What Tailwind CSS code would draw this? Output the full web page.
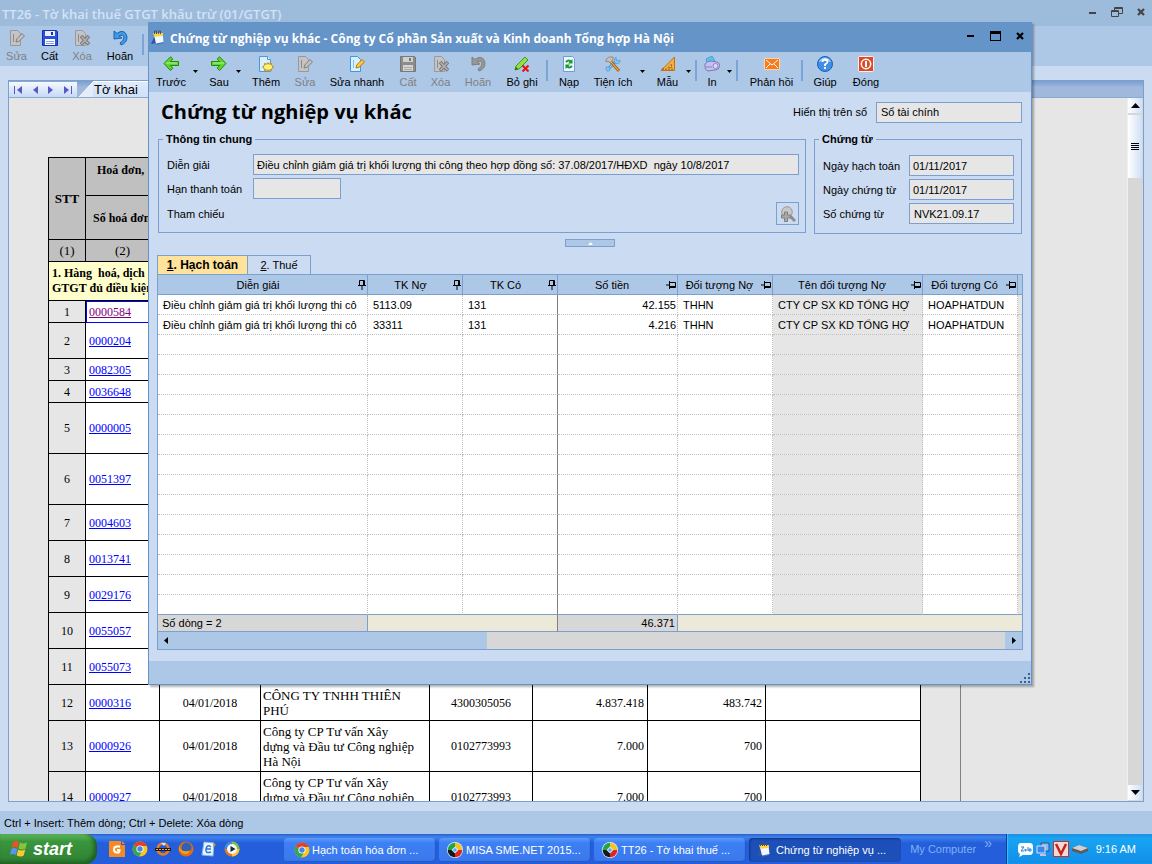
<!DOCTYPE html>
<html lang="vi">
<head>
    <meta charset="UTF-8">
    <meta name="viewport" content="width=device-width, initial-scale=1.0">
    <title>TT26 - Tờ khai thuế GTGT khấu trừ (01/GTGT)</title>
    <script src="https://cdn.jsdelivr.net/npm/@tailwindcss/browser@4"></script>
</head>
<body class="h-screen overflow-hidden bg-[#cbdbf1] font-['Liberation_Sans',sans-serif] text-[11px] leading-[14px] text-black">

    <!-- Icon set -->
    <svg class="hidden">
        <symbol id="i-left" viewBox="0 0 16 16"><path d="M7.500.8 1 7.500l6.500 7 2.300-2.300L7.300 9.500H15.500V5.500H7.300l2.500-2.500z" fill="#5fd62c" stroke="#1f8a16" stroke-linejoin="round"/><path d="M3 7h11" stroke="#b4f58c"/></symbol>
        <symbol id="i-right" viewBox="0 0 16 16"><path d="m8.500.8 6.500 6.700-6.500 7-2.300-2.300 2.500-2.700H.5V5.500h8.200L6.200 3z" fill="#5fd62c" stroke="#1f8a16" stroke-linejoin="round"/><path d="M2 7h11" stroke="#b4f58c"/></symbol>
        <symbol id="i-caret" viewBox="0 0 5 3"><path d="M0 0h5L2.500 3z" fill="#000"/></symbol>
        <symbol id="i-add" viewBox="0 0 16 16"><path d="M1.500.5h8l3 3v12h-11z" fill="#d8efff" stroke="#4a9ad8"/><path d="M9.500.5v3h3" fill="#fff" stroke="#4a9ad8"/><path d="m10 6 1.500 1.500L14 7v2l2 2-2 2v2l-2.500-.5L10 16l-1.500-1.500L6 15v-2l-2-2 2-2V7l2.500.5z" fill="#c79a1c"/><ellipse cx="10" cy="11" rx="4" ry="2.800" fill="#fff27a"/></symbol>
        <symbol id="i-edit" viewBox="0 0 16 16"><path d="M1.500.5h7l3 3v12h-10z" fill="#d8efff" stroke="#3f97dc"/><path d="M4 4h1v8H4z" fill="#7fc0ee"/><path d="m7 12 .7-3L13 3.500 15.500 6 10 11.300z" fill="#ffc83c" stroke="#b97a12"/></symbol>
        <symbol id="i-edit-off" viewBox="0 0 16 16"><path d="M1.500.5h7l3 3v12h-10z" fill="#c4c4c4" stroke="#989898"/><path d="M4 4h1v8H4z" fill="#8d8d8d"/><path d="m7 12 .7-3L13 3.500 15.500 6 10 11.300z" fill="#c0c0c0" stroke="#808080"/></symbol>
        <symbol id="i-save" viewBox="0 0 16 16"><path d="M.5.5h14l1 1v14H.5z" fill="#2b50dc" stroke="#1b30b0"/><path d="M3 1h10v5H3z" fill="#e8f0ff"/><path d="M9 2h2v3H9z" fill="#1b30b0"/><path d="M3 9h10v6H3z" fill="#fff"/><path d="M4 11h8v1H4zM4 13h8v1H4z" fill="#8aa4ec"/></symbol>
        <symbol id="i-save-off" viewBox="0 0 16 16"><path d="M.5.5h14l1 1v14H.5z" fill="#8c8c8c" stroke="#787878"/><path d="M3 1h10v5H3z" fill="#d0d0d0"/><path d="M9 2h2v3H9z" fill="#777"/><path d="M3 9h10v6H3z" fill="#d4d4d4"/><path d="M4 11h8v1H4zM4 13h8v1H4z" fill="#aaa"/></symbol>
        <symbol id="i-del-off" viewBox="0 0 16 16"><path d="M1.500.5h7l3 3v12h-10z" fill="#c4c4c4" stroke="#9a9a9a"/><path d="M4 4h1v8H4z" fill="#8d8d8d"/><path d="m7 6 8 8.500m0-8.500-8 8.500" stroke="#777" stroke-width="3.500"/><path d="m7.500 6.500 7 7.500m0-7.500-7 7.500" stroke="#b5b5b5" stroke-width="1.500"/></symbol>
        <symbol id="i-undo" viewBox="0 0 16 16"><path d="M2 1v8l8-1-3-2q4-2 5 1 0 4-4 6l1 2q6-2 6-8Q14 1 9 1.500 7 2 5 3.500z" fill="#3d9be8" stroke="#1b62ae"/></symbol>
        <symbol id="i-undo-off" viewBox="0 0 16 16"><path d="M2 1v8l8-1-3-2q4-2 5 1 0 4-4 6l1 2q6-2 6-8Q14 1 9 1.500 7 2 5 3.500z" fill="#979797" stroke="#7e7e7e"/></symbol>
        <symbol id="i-unpost" viewBox="0 0 16 16"><path d="m1 14 1-4L11 1l3 3-9 9z" fill="#8fe04a" stroke="#3e9a1a"/><path d="m1 14 1-3 2 2z" fill="#5c4a20"/><path d="m8.500 9.500 6 6m0-6-6 6" stroke="#e81010" stroke-width="2"/></symbol>
        <symbol id="i-reload" viewBox="0 0 16 16"><path d="M2.500.5h9l2 2v13h-11z" fill="#eef5ff" stroke="#6f9bd8"/><path d="M5 6q3-3 5 0M11 10q-3 3-5 0" fill="none" stroke="#12992a" stroke-width="2"/><path d="M11.500 3v4.500H7zM4.500 13V8.500H9z" fill="#12992a"/></symbol>
        <symbol id="i-tools" viewBox="0 0 16 16"><path d="m3 13 9-9" stroke="#4b97d6" stroke-width="3"/><path d="m3 13 9-9" stroke="#b9dcfa"/><path d="M11 1v3l2 1 2-1v2l-2 2-3-1-1-3zM1 11h3l1 3-1 1H2l-1-2z" fill="#8cc3ef" stroke="#4b97d6" stroke-width=".7"/><path d="m6 6 8 9" stroke="#a8661a" stroke-width="3"/><path d="m6 6 7.500 8.500" stroke="#ffc14a"/><path d="M1 3.500 4 1h4v2L5 7 3 5 1 6z" fill="#c9c0ae" stroke="#7e7668" stroke-width=".7"/></symbol>
        <symbol id="i-ruler" viewBox="0 0 16 16"><path d="M14.500 1v13.500H1z" fill="#f5ad3c" stroke="#bd7413"/><path d="M11.500 8v3.500H8z" fill="#cfe0f4" stroke="#bd7413"/><path d="M3 14v-2M6 14v-1.500M9 14v-1.500M12 14v-1.500" stroke="#7d4a08"/></symbol>
        <symbol id="i-print" viewBox="0 0 16 16"><path d="m3 7-1-4 6-3 3 5z" fill="#5bc0f0" stroke="#3b93c9" stroke-width=".7"/><path d="M1 8q2-3 6-3l6 1q3 1 3 4-1 4-5 4l-7 1q-3-1-3-4z" fill="#c4c1ee" stroke="#7b77bd"/><circle cx="11.500" cy="10" r="2.500" fill="#dcdaf8" stroke="#8a86c8"/><path d="M2 11h6" stroke="#8a86c8"/></symbol>
        <symbol id="i-mail" viewBox="0 0 16 16"><path d="M.5 2.500h15v11H.5z" fill="#f47b20" stroke="#fbd3a8"/><path d="m2 4 6 5 6-5M2 12l4-4m8 4-4-4" fill="none" stroke="#fff"/></symbol>
        <symbol id="i-help" viewBox="0 0 16 16"><circle cx="8" cy="8" r="7.500" fill="#3f8fe6" stroke="#1c5fb4"/><path d="M2 6q1-4 6-4.500Q13 2 14 6q-6-2-12 0" fill="#9ccaf8"/><path d="M5.500 6q0-2.500 2.500-2.500T10.500 6Q10.500 7 8 8.500V10m0 1v2" fill="none" stroke="#fff" stroke-width="1.800"/></symbol>
        <symbol id="i-close" viewBox="0 0 16 16"><rect x=".5" y=".5" width="15" height="15" rx="1" fill="#de4a28" stroke="#fff0e8"/><circle cx="8" cy="8" r="4.700" fill="none" stroke="#fff" stroke-width="1.500"/><path d="M8 5v6" stroke="#fff" stroke-width="2"/></symbol>
        <symbol id="i-note" viewBox="0 0 16 16"><path d="m0 14 4-9 3 8z" fill="#2a55b0"/><path d="m11 3 1.500 10L5 15z" fill="#3f6fc4"/><path d="M2.500 3h9l1 9-7.500 1.500z" fill="#f2f8ff"/><path d="M2.500 3h9l.3 3-8.800.7z" fill="#ffd23c"/><path d="M3.500 4V1h2v3m2 0V1h2v3" fill="none" stroke="#44546e"/></symbol>
        <symbol id="i-pin" viewBox="0 0 8 10"><path d="M1.500 5V.5h5V5M0 5.500h8M4 6v4M5.500 1v4" fill="none" stroke="#000"/></symbol>
        <symbol id="i-pin-side" viewBox="0 0 10 8"><path d="M4 1.500h5.500v5H4M3.500 0v8M0 4h3M4 5.500h5" fill="none" stroke="#000"/></symbol>
        <symbol id="i-chrome" viewBox="0 0 16 16"><circle cx="8" cy="8" r="7.500" fill="#fbc51b"/><path d="M8 8 1.500 4.200A7.500 7.500 0 0 1 14.500 4.200L15 5H8z" fill="#e0402f"/><path d="M8 8 1.500 4.200A7.500 7.500 0 0 0 7 15.400l3.500-6z" fill="#35a552"/><circle cx="8" cy="8" r="3.600" fill="#fff"/><circle cx="8" cy="8" r="2.700" fill="#4585ee"/></symbol>
        <symbol id="i-misa" viewBox="0 0 16 16"><circle cx="8" cy="8" r="8" fill="#e8ecf0"/><path d="M8 8V.7A7.300 7.300 0 0 0 .7 8z" fill="#22a548"/><path d="M8 8h7.300A7.300 7.300 0 0 0 8 .7z" fill="#f2c41c"/><path d="M8 8v7.300A7.300 7.300 0 0 0 15.300 8z" fill="#e02420"/><path d="M8 8H.7A7.300 7.300 0 0 0 8 15.300z" fill="#181818"/><path d="m8 4.500 3.500 3.500L8 11.500 4.500 8z" fill="#cfe4fb"/><path d="m8 6 2 2-2 2-2-2z" fill="#5aa5ee"/></symbol>
    </svg>

    <div class="flex h-full flex-col">

        <!-- Main window -->
        <header class="flex h-[26px] shrink-0 items-center justify-between bg-[#9dbbdb] pl-[2px] pr-[7px] pt-[2px]">
            <h1 class="whitespace-nowrap font-['Open_Sans',sans-serif] text-[13px] font-semibold text-[#d3e2f5]">TT26 - Tờ khai thuế GTGT khấu trừ (01/GTGT)</h1>
            <div class="flex items-center gap-[14px] pb-1">
                <button aria-label="Thu nhỏ"><svg class="h-[11px] w-[8px]" viewBox="0 0 8 11"><path d="M0 5h7v2H0z" fill="#444"/></svg></button>
                <button aria-label="Khôi phục"><svg class="h-[11px] w-[12px]" viewBox="0 0 12 11"><path d="M3.500 3V.5h8v6H8M4 1.500h7M.5 3.500h7v6h-7zM1 4.500h6" fill="none" stroke="#444"/></svg></button>
                <button aria-label="Đóng"><svg class="h-[8px] w-[8px]" viewBox="0 0 8 8"><path d="m1 1 6 6m0-6L1 7" stroke="#444" stroke-width="2.200"/></svg></button>
            </div>
        </header>
        <nav class="flex h-10 shrink-0 items-start bg-[#adc7e7]">
            <button disabled class="flex w-[33px] flex-col items-center gap-[3px] pt-1 text-[#808080]"><svg class="size-4"><use href="#i-edit-off"/></svg>Sửa</button>
            <button class="flex w-[33px] flex-col items-center gap-[3px] pt-1"><svg class="size-4"><use href="#i-save"/></svg>Cất</button>
            <button disabled class="flex w-8 flex-col items-center gap-[3px] pt-1 text-[#808080]"><svg class="size-4"><use href="#i-del-off"/></svg>Xóa</button>
            <button class="flex w-11 flex-col items-center gap-[3px] pt-1"><svg class="size-4"><use href="#i-undo"/></svg>Hoãn</button>
            <span class="mt-2 h-[21px] w-[2px] bg-[#7ba5d8]"></span>
        </nav>

        <main class="flex min-h-0 flex-1 flex-col px-2 pb-[9px] pt-[14px]">
            <div class="flex min-h-0 flex-1 flex-col border border-[#7ba0cf] bg-[#e6e6e6]">
                <div class="flex h-[17px] shrink-0 items-stretch border-b border-[#8ea9cf] bg-linear-to-b from-[#7a9fd0] to-[#a1b8dd] to-40%">
                    <div class="flex w-[68px] items-center justify-around border-t border-[#8ea9cf] bg-linear-to-b from-[#f4f9ff] to-[#c5daf5]">
                        <button aria-label="Đầu"><svg class="h-2 w-2" viewBox="0 0 8 8"><path d="M0 0h1v8H0zM8 0v8L3 4z" fill="#5a57cc"/></svg></button>
                        <button aria-label="Trước"><svg class="h-2 w-[5px]" viewBox="0 0 5 8"><path d="M5 0v8L0 4z" fill="#5a57cc"/></svg></button>
                        <button aria-label="Sau"><svg class="h-2 w-[5px]" viewBox="0 0 5 8"><path d="M0 0v8l5-4z" fill="#5a57cc"/></svg></button>
                        <button aria-label="Cuối"><svg class="h-2 w-2" viewBox="0 0 8 8"><path d="M7 0h1v8H7zM0 0v8l5-4z" fill="#5a57cc"/></svg></button>
                    </div>
                    <svg class="ml-[2px] h-4 w-[14px]" viewBox="0 0 14 16"><path d="M0 16 14 1v15z" fill="#e2edfb"/><path d="M0 16 14 1" stroke="#fff"/></svg>
                    <button class="w-[60px] border-t border-white bg-linear-to-b from-[#dfeafa] to-[#cfe0f7] pl-px text-left text-[13px]">Tờ khai</button>
                </div>
                <div class="flex min-h-0 flex-1">
                    <div class="min-w-0 flex-1 overflow-hidden">
                        <div class="min-h-full w-[952px] border-r border-[#808080] pl-[39px] pt-[59px]">
                            <table class="w-[873px] table-fixed border-separate border-spacing-0 border-l border-t border-black bg-white font-['Liberation_Serif',serif] text-xs">
                                <colgroup>
                                    <col class="w-[37px]"><col class="w-[74px]"><col class="w-[101px]"><col class="w-[169px]"><col class="w-[103px]"><col class="w-[115px]"><col class="w-[118px]"><col class="w-[155px]">
                                </colgroup>
                                <thead class="bg-[#c0c0c0]">
                                    <tr class="h-[38px]">
                                        <th rowspan="2" class="border-b border-r border-black text-[13px]">STT</th>
                                        <th colspan="7" class="border-b border-r border-black pb-[14px] pl-[11px] text-left">Hoá đơn,</th>
                                    </tr>
                                    <tr class="h-11">
                                        <th class="whitespace-nowrap border-b border-r border-black pl-[7px] text-left">Số hoá đơn</th>
                                        <th colspan="6" class="border-b border-r border-black"></th>
                                    </tr>
                                    <tr class="h-[22px] text-[13px]">
                                        <td class="border-b border-r border-black text-center">(1)</td>
                                        <td class="border-b border-r border-black text-center">(2)</td>
                                        <td colspan="6" class="border-b border-r border-black"></td>
                                    </tr>
                                </thead>
                                <tbody id="invoices">
                                    <tr class="h-[39px]">
                                        <th colspan="8" class="border-b border-r border-black bg-[#ffffcc] pl-[3px] text-left leading-[15px]">1. Hàng&nbsp; hoá, dịch<br>GTGT đủ điều kiện</th>
                                    </tr>
                                </tbody>
                            </table>
                        </div>
                    </div>
                    <div class="flex w-[16px] flex-col border-l border-[#f0f0f0] bg-[#d7d7d7] pr-[1px]">
                        <button aria-label="Lên" class="flex h-[15px] items-center justify-center bg-linear-to-r from-white to-[#cfdff5]"><svg class="h-[5px] w-[9px]" viewBox="0 0 9 5"><path d="M4.500 0 9 5H0z"/></svg></button>
                        <div class="mt-[2px] flex h-[63px] flex-col items-center justify-center gap-px bg-linear-to-r from-white to-[#cfdff5]">
                            <span class="h-px w-2 bg-black"></span><span class="h-px w-2 bg-black"></span><span class="h-px w-2 bg-black"></span><span class="h-px w-2 bg-black"></span>
                        </div>
                        <button aria-label="Xuống" class="mt-auto mb-px flex h-[15px] items-center justify-center bg-linear-to-r from-white to-[#cfdff5]"><svg class="h-[5px] w-[9px]" viewBox="0 0 9 5"><path d="M0 0h9L4.500 5z"/></svg></button>
                    </div>
                </div>
            </div>
        </main>

        <footer class="flex h-[23px] shrink-0 items-center bg-[#adc7e7] pl-1">Ctrl + Insert: Thêm dòng; Ctrl + Delete: Xóa dòng</footer>

        <!-- Taskbar -->
        <div class="flex h-[30px] shrink-0 items-stretch bg-linear-to-b from-[#2a5ecb] via-[#3f83ee] via-10% to-[#245edb] to-30% text-white">
            <button class="flex w-[97px] items-center gap-[5px] rounded-r-xl bg-linear-to-b from-[#5fb75f] via-[#3a963c] via-25% to-[#2f8033] pl-[10px] text-lg font-bold italic shadow-[inset_-3px_-2px_4px_#1d5c22]">
                <svg class="h-[18px] w-[18px]" viewBox="0 0 18 18"><path d="M3 2q3-2 6 0L7.500 8Q4.500 6 1.500 8z" fill="#e8542a"/><path d="M10 2.500q3 2 7 0L15.500 8.500q-3 2-7 0z" fill="#86c440"/><path d="M1.300 9q3-2 6 0L6 15q-3-2-6 0z" fill="#5a94f0"/><path d="M8.200 9.500q3 2 7 0L13.700 15.500q-3 2-7 0z" fill="#fbc832"/></svg>
                <span>start</span>
            </button>
            <div class="flex w-[187px] items-center gap-[7px] pl-3">
                <svg class="size-4" viewBox="0 0 16 16"><path d="M0 0h12v4h4v12H0z" fill="#f58a1e"/><path d="M13 0v3h3z" fill="#f58a1e"/><path d="M11 5.500H8Q5 5.500 5 8.500t3 3h1.500q1 0 1-2.500H8" fill="none" stroke="#fff" stroke-width="2"/></svg>
                <svg class="size-4"><use href="#i-chrome"/></svg>
                <svg class="size-4" viewBox="0 0 16 16"><circle cx="8" cy="8" r="5.500" fill="none" stroke="#f07a1c" stroke-width="2.500"/><path d="M0 7h16v3H0z" fill="#231c18"/><path d="M1 8.500h14" stroke="#f8a030" stroke-dasharray="2 1"/><path d="M6 2h5l-2 3z" fill="#d8e8ff"/></svg>
                <svg class="size-4" viewBox="0 0 16 16"><circle cx="8" cy="8" r="7.500" fill="#e66a10"/><circle cx="8.500" cy="6.500" r="5" fill="#2c62b8"/><path d="M1 4q1 6 5 6 4 1 6-1-1 4-4 4-5 0-7-5z" fill="#f8a21c"/></svg>
                <svg class="size-4" viewBox="0 0 16 16"><path d="m3 1 10 1-1 13-11-1z" fill="#eaf4ff" stroke="#89b8e8"/><path d="M10 6Q6 3 5 8t5 3M5 8h5" fill="none" stroke="#2a7ad8" stroke-width="1.500"/><path d="m12 2 3 2-3 2z" fill="#d89a30"/></svg>
                <svg class="size-4" viewBox="0 0 16 16"><circle cx="8" cy="8" r="7.500" fill="#e07822"/><path d="M8 .5A7.500 7.500 0 0 1 15.500 8H8z" fill="#7cc04a"/><path d="M8 .5A7.500 7.500 0 0 0 .5 8H8z" fill="#3a8ae0"/><path d="M8 15.500A7.500 7.500 0 0 0 15.500 8H8z" fill="#f8cc30"/><circle cx="8" cy="8" r="5" fill="#f4f8ff"/><path d="m6.500 5 5 3-5 3z" fill="#202830"/></svg>
            </div>
            <div class="flex flex-1 items-center gap-[3px] pt-px">
                <button class="flex h-6 w-[152px] items-center gap-[2px] rounded-sm bg-linear-to-b from-[#5c9bfb] via-[#3c80f4] via-20% to-[#3a78ec] px-[10px] shadow-[inset_-1px_-1px_1px_#2257c4]"><svg class="size-4 shrink-0"><use href="#i-chrome"/></svg><span class="whitespace-nowrap">Hạch toán hóa đơn ...</span></button>
                <button class="flex h-6 w-[152px] items-center gap-[3px] rounded-sm bg-linear-to-b from-[#5c9bfb] via-[#3c80f4] via-20% to-[#3a78ec] px-[8px] shadow-[inset_-1px_-1px_1px_#2257c4]"><svg class="size-4 shrink-0"><use href="#i-misa"/></svg><span class="whitespace-nowrap">MISA SME.NET 2015...</span></button>
                <button class="flex h-6 w-[152px] items-center gap-[3px] rounded-sm bg-linear-to-b from-[#5c9bfb] via-[#3c80f4] via-20% to-[#3a78ec] px-[8px] shadow-[inset_-1px_-1px_1px_#2257c4]"><svg class="size-4 shrink-0"><use href="#i-misa"/></svg><span class="whitespace-nowrap">TT26 - Tờ khai thuế ...</span></button>
                <button class="flex h-6 w-[152px] items-center gap-[3px] rounded-sm bg-[#1c4fb8] px-[8px] shadow-[inset_1px_1px_2px_#123785]"><svg class="size-4 shrink-0"><use href="#i-note"/></svg><span class="whitespace-nowrap">Chứng từ nghiệp vụ ...</span></button>
            </div>
            <div class="flex items-center gap-[8px] pr-[14px] text-[#7fb2f5]"><span>My Computer</span><span class="pb-3 text-sm">»</span></div>
            <div class="flex w-[146px] items-center gap-[3px] border-l border-[#0b3c9c] bg-linear-to-b from-[#1b8de0] via-[#18a4f2] via-15% to-[#128ee8] pl-[11px] shadow-[inset_1px_0_1px_#35c5fb]">
                <svg class="h-[15px] w-[15px]" viewBox="0 0 15 15"><path d="M3 1h9q3 0 3 4v4q0 4-3 4H5l-4 2 1-3Q0 11 0 9V5q0-4 3-4" fill="#fff"/><path d="M3 5h3L3 9h3m1-2v2h1V7m2-2v4m1-2h2v2h-2z" fill="none" stroke="#1a80e0"/></svg>
                <svg class="h-[15px] w-[14px]" viewBox="0 0 14 15"><path d="M5 1h8v8H5z" fill="#8fb8f0" stroke="#28508c"/><path d="M1 4h8v7H1z" fill="#3f86ea" stroke="#d0e4ff"/><path d="M4 12h6v2H4z" fill="#c8c0dc"/></svg>
                <svg class="size-4" viewBox="0 0 16 16"><path d="M0 0h16v16H0z" fill="#c8302c"/><path d="M1 1h14v14H1z" fill="#f4d8d2"/><path d="m3 3 5 10 5-10" fill="none" stroke="#c8201c" stroke-width="2.500"/></svg>
                <svg class="h-[10px] w-4" viewBox="0 0 16 10"><path d="m0 4 7-3 9 3v3l-7 3-9-3z" fill="#5b5b5b"/><path d="m0 4 7-3 9 3-7 3z" fill="#cfcfcf"/></svg>
                <span class="ml-auto whitespace-nowrap pr-4">9:16 AM</span>
            </div>
        </div>
    </div>

    <!-- Voucher window -->
    <section class="absolute left-[148px] top-[22px] flex w-[884px] flex-col border border-[#6493c7] bg-[#cbdbf1] shadow-[2px_2px_2px_#0000004d]">
        <header class="flex h-[29px] items-center bg-[#6494c8] pl-[2px] pr-[7px]">
            <svg class="size-4"><use href="#i-note"/></svg>
            <h2 class="ml-[3px] flex-1 whitespace-nowrap pt-[2px] font-['Open_Sans',sans-serif] text-xs font-bold text-white">Chứng từ nghiệp vụ khác - Công ty Cổ phần Sản xuất và Kinh doanh Tổng hợp Hà Nội</h2>
            <div class="flex items-center gap-[15px] pb-1">
                <button aria-label="Thu nhỏ"><svg class="h-[10px] w-[8px]" viewBox="0 0 8 10"><path d="M0 4h7v2H0z"/></svg></button>
                <button aria-label="Phóng to"><svg class="h-[10px] w-[11px]" viewBox="0 0 11 10"><path d="M0 0h11v10H0zm1 3v6h9V3z" fill-rule="evenodd"/></svg></button>
                <button aria-label="Đóng"><svg class="h-[8px] w-[8px]" viewBox="0 0 8 8"><path d="m1 1 6 6m0-6L1 7" stroke="#000" stroke-width="2.200"/></svg></button>
            </div>
        </header>

        <nav class="flex h-10 items-start whitespace-nowrap bg-[#adc7e7]">
            <button class="flex w-11 flex-col items-center gap-[3px] pt-1"><svg class="size-4"><use href="#i-left"/></svg>Trước</button>
            <button aria-label="Chọn" class="w-[9px] pt-[18px]"><svg class="h-[3px] w-[5px]"><use href="#i-caret"/></svg></button>
            <button class="flex w-[34px] flex-col items-center gap-[3px] pt-1"><svg class="size-4"><use href="#i-right"/></svg>Sau</button>
            <button aria-label="Chọn" class="w-[9px] pt-[18px]"><svg class="h-[3px] w-[5px]"><use href="#i-caret"/></svg></button>
            <button class="flex w-[42px] flex-col items-center gap-[3px] pt-1"><svg class="size-4"><use href="#i-add"/></svg>Thêm</button>
            <button disabled class="flex w-9 flex-col items-center gap-[3px] pt-1 text-[#808080]"><svg class="size-4"><use href="#i-edit-off"/></svg>Sửa</button>
            <button class="flex w-[68px] flex-col items-center gap-[3px] pt-1"><svg class="size-4"><use href="#i-edit"/></svg>Sửa nhanh</button>
            <button disabled class="flex w-[34px] flex-col items-center gap-[3px] pt-1 text-[#808080]"><svg class="size-4"><use href="#i-save-off"/></svg>Cất</button>
            <button disabled class="flex w-[31px] flex-col items-center gap-[3px] pt-1 text-[#808080]"><svg class="size-4"><use href="#i-del-off"/></svg>Xóa</button>
            <button disabled class="flex w-11 flex-col items-center gap-[3px] pt-1 text-[#808080]"><svg class="size-4"><use href="#i-undo-off"/></svg>Hoãn</button>
            <button class="flex w-11 flex-col items-center gap-[3px] pt-1"><svg class="size-4"><use href="#i-unpost"/></svg>Bỏ ghi</button>
            <span class="ml-[2px] mt-2 h-[21px] w-[2px] bg-[#7ba5d8]"></span>
            <button class="flex w-[42px] flex-col items-center gap-[3px] pt-1"><svg class="size-4"><use href="#i-reload"/></svg>Nạp</button>
            <button class="flex w-[46px] flex-col items-center gap-[3px] pt-1"><svg class="size-4"><use href="#i-tools"/></svg>Tiện ích</button>
            <button aria-label="Chọn" class="ml-1 w-[9px] pt-[18px]"><svg class="h-[3px] w-[5px]"><use href="#i-caret"/></svg></button>
            <button class="flex w-[37px] flex-col items-center gap-[3px] pt-1"><svg class="size-4"><use href="#i-ruler"/></svg>Mẫu</button>
            <button aria-label="Chọn" class="w-[9px] pt-[18px]"><svg class="h-[3px] w-[5px]"><use href="#i-caret"/></svg></button>
            <span class="mt-2 h-[21px] w-[2px] bg-[#7ba5d8]"></span>
            <button class="flex w-[30px] flex-col items-center gap-[3px] pt-1"><svg class="size-4"><use href="#i-print"/></svg>In</button>
            <button aria-label="Chọn" class="w-[9px] pt-[18px]"><svg class="h-[3px] w-[5px]"><use href="#i-caret"/></svg></button>
            <span class="mt-2 h-[21px] w-[2px] bg-[#7ba5d8]"></span>
            <button class="ml-1 flex w-[59px] flex-col items-center gap-[3px] pt-1"><svg class="size-4"><use href="#i-mail"/></svg>Phản hồi</button>
            <span class="mt-2 h-[21px] w-[2px] bg-[#7ba5d8]"></span>
            <button class="flex w-11 flex-col items-center gap-[3px] pt-1"><svg class="size-4"><use href="#i-help"/></svg>Giúp</button>
            <button class="flex w-[38px] flex-col items-center gap-[3px] pt-1"><svg class="size-4"><use href="#i-close"/></svg>Đóng</button>
        </nav>

        <form class="px-[9px]">
            <div class="flex h-10 items-center">
                <h3 class="flex-1 pl-[3px] font-['Open_Sans',sans-serif] text-xl font-bold">Chứng từ nghiệp vụ khác</h3>
                <label for="book" class="mr-[9px]">Hiển thị trên sổ</label>
                <input id="book" readonly value="Sổ tài chính" class="h-[21px] w-[146px] border border-[#7ba0cf] bg-[#e6e6e6] px-1">
            </div>
            <div class="flex items-start gap-2">
                <fieldset class="min-w-0 flex-1 border border-[#7ba0cf] pb-[7px] pl-2 pr-[6px]">
                    <legend class="-ml-1 px-[3px] leading-[15px] font-bold">Thông tin chung</legend>
                    <div class="grid grid-cols-[86px_1fr] items-center gap-y-[3px] pt-[7px]">
                        <label for="memo">Diễn giải</label>
                        <input id="memo" readonly value="Điều chỉnh giảm giá trị khối lượng thi công theo hợp đồng số: 37.08/2017/HĐXD  ngày 10/8/2017" class="h-[21px] border border-[#7ba0cf] bg-[#e6e6e6] px-[3px]">
                        <label for="due">Hạn thanh toán</label>
                        <input id="due" readonly class="h-[21px] w-[88px] border border-[#7ba0cf] bg-[#e6e6e6] px-[3px]">
                        <span>Tham chiếu</span>
                        <button type="button" aria-label="Tìm tham chiếu" class="flex size-[23px] items-center justify-center justify-self-end border border-[#7ba0cf]">
                            <svg class="size-4" viewBox="0 0 16 16"><path d="m10 10 5 5" stroke="#8d8d8d" stroke-width="3"/><circle cx="7" cy="6" r="5.300" fill="#c8c8c8" stroke="#9a9a9a"/><path d="M4.500 6h3v3h3v3h-3v3.500h-3V12h-3V9h3z" fill="#a8a8a8" stroke="#808080"/></svg>
                        </button>
                    </div>
                </fieldset>
                <fieldset class="w-[208px] border border-[#7ba0cf] pb-[9px] pl-2 pr-[7px]">
                    <legend class="-ml-1 px-[3px] leading-[15px] font-bold">Chứng từ</legend>
                    <div class="grid grid-cols-[86px_1fr] items-center gap-y-[3px] pt-2">
                        <label for="posted">Ngày hạch toán</label>
                        <input id="posted" readonly value="01/11/2017" class="h-[21px] w-full min-w-0 border border-[#7ba0cf] bg-[#e6e6e6] px-[3px]">
                        <label for="issued">Ngày chứng từ</label>
                        <input id="issued" readonly value="01/11/2017" class="h-[21px] w-full min-w-0 border border-[#7ba0cf] bg-[#e6e6e6] px-[3px]">
                        <label for="number">Số chứng từ</label>
                        <input id="number" readonly value="NVK21.09.17" class="h-[21px] w-full min-w-0 border border-[#7ba0cf] bg-[#e6e6e6] px-1">
                    </div>
                </fieldset>
            </div>
        </form>

        <button aria-label="Thu gọn" class="mt-[5px] flex h-2 w-[50px] items-center justify-center self-center border border-[#7ba0cf] bg-[#adc7e7]"><svg class="h-[3px] w-[5px]" viewBox="0 0 5 3"><path d="M2.500 0 5 3H0z" fill="#fff"/></svg></button>

        <div class="mt-2 px-2 pb-[11px]">
            <div class="flex h-[19px]">
                <button class="w-[91px] border border-b-0 border-[#7ba0cf] bg-[#ffe29b] text-xs font-bold"><u>1</u>. Hạch toán</button>
                <button class="w-[63px] border border-b-0 border-l-0 border-[#7ba0cf]"><u>2</u>. Thuế</button>
            </div>
            <div class="border border-[#7ba0cf]">
                <table class="w-full table-fixed border-separate border-spacing-0 whitespace-nowrap bg-white">
                    <colgroup>
                        <col class="w-[210px]"><col class="w-[95px]"><col class="w-[95px]"><col class="w-[120px]"><col class="w-[95px]"><col class="w-[150px]"><col class="w-[95px]"><col>
                    </colgroup>
                    <thead class="bg-[#adc7e7]">
                        <tr id="columns" class="h-5"></tr>
                    </thead>
                    <tbody id="entries"></tbody>
                    <tfoot class="bg-[#ece9d8]">
                        <tr class="h-[17px]">
                            <td class="border-b border-r border-[#7ba0cf] bg-[#d7d7d7] pl-1">Số dòng = 2</td>
                            <td class="border-b border-[#7ba0cf]"></td>
                            <td class="border-b border-r border-b-[#7ba0cf] border-r-[#808080]"></td>
                            <td class="border-b border-r border-[#7ba0cf] bg-[#d7d7d7] pr-[2px] text-right">46.371</td>
                            <td colspan="4" class="border-b border-[#7ba0cf]"></td>
                        </tr>
                    </tfoot>
                </table>
                <div class="flex h-[17px] items-stretch justify-between bg-[#d7d7d7]">
                    <button aria-label="Cuộn trái" class="w-[329px] bg-[#adc7e7] pl-[6px]"><svg class="h-[7px] w-1" viewBox="0 0 4 7"><path d="M4 0v7L0 3.500z"/></svg></button>
                    <button aria-label="Cuộn phải" class="flex w-[17px] items-center justify-center bg-[#adc7e7]"><svg class="h-[7px] w-1" viewBox="0 0 4 7"><path d="M0 0v7l4-3.500z"/></svg></button>
                </div>
            </div>
        </div>

        <footer class="flex h-[23px] items-end justify-end bg-[#adc7e7] pb-px pr-px">
            <svg class="size-[11px]" viewBox="0 0 11 11"><path d="M9 1h2v2H9zM9 5h2v2H9zM9 9h2v2H9zM5 5h2v2H5zM5 9h2v2H5zM1 9h2v2H1z" fill="#3f5f8f"/></svg>
        </footer>
    </section>

    <script>
        const company = 'Công ty CP Tư vấn Xây<br>dựng và Đầu tư Công nghiệp<br>Hà Nội';
        const invoices = [
            { h: 22, no: '0000584' },
            { h: 36, no: '0000204' },
            { h: 22, no: '0082305' },
            { h: 22, no: '0036648' },
            { h: 51, no: '0000005' },
            { h: 51, no: '0051397' },
            { h: 36, no: '0004603' },
            { h: 36, no: '0013741' },
            { h: 36, no: '0029176' },
            { h: 36, no: '0055057' },
            { h: 36, no: '0055073' },
            { h: 36, no: '0000316', date: '04/01/2018', name: 'CÔNG TY TNHH THIÊN<br>PHÚ', tax: '4300305056', amount: '4.837.418', vat: '483.742' },
            { h: 51, no: '0000926', date: '04/01/2018', name: company, tax: '0102773993', amount: '7.000', vat: '700' },
            { h: 51, no: '0000927', date: '04/01/2018', name: company, tax: '0102773993', amount: '7.000', vat: '700' },
        ];

        document.getElementById('invoices').insertAdjacentHTML('beforeend', invoices.map((r, i) => `
            <tr style="height:${r.h}px">
                <td class="border-b border-r border-black bg-[#e6e6e6] text-center">${i + 1}</td>
                <td class="border-b border-r border-black pl-[3px] ${i === 0 ? 'outline outline-1 -outline-offset-1 outline-[#0000ff]' : ''}"><a href="#" class="underline ${i === 0 ? 'text-[#800080]' : 'text-[#0000ff]'}">${r.no}</a></td>
                <td class="border-b border-r border-black text-center">${r.date || ''}</td>
                <td class="border-b border-r border-black px-[2px] text-[13px] leading-[15px]">${r.name || ''}</td>
                <td class="border-b border-r border-black text-center">${r.tax || ''}</td>
                <td class="border-b border-r border-black pr-[3px] text-right">${r.amount || ''}</td>
                <td class="border-b border-r border-black pr-[3px] text-right">${r.vat || ''}</td>
                <td class="border-b border-r border-black"></td>
            </tr>`).join(''));

        // columns with a side pin are not frozen
        const columns = [['Diễn giải', true], ['TK Nợ', true], ['TK Có', true], ['Số tiền'], ['Đối tượng Nợ'], ['Tên đối tượng Nợ'], ['Đối tượng Có']];
        document.getElementById('columns').innerHTML = columns.map(([name, frozen]) => `
            <th class="border-b border-r border-[#7ba0cf] font-normal"><div class="flex items-center pr-px"><span class="flex-1">${name}</span>${frozen
                ? '<svg class="h-[10px] w-2"><use href="#i-pin"/></svg>'
                : '<svg class="h-2 w-[10px]"><use href="#i-pin-side"/></svg>'}</div></th>`).join('') + '<th class="border-b border-[#7ba0cf]"></th>';

        const entries = [
            ['Điều chỉnh giảm giá trị khối lượng thi cô', '5113.09', '131', '42.155', 'THHN', 'CTY CP SX KD TỔNG HỢ', 'HOAPHATDUN'],
            ['Điều chỉnh giảm giá trị khối lượng thi cô', '33311', '131', '4.216', 'THHN', 'CTY CP SX KD TỔNG HỢ', 'HOAPHATDUN'],
        ];
        let body = '';
        for (let i = 0; i < 16; i++) {
            const e = entries[i] || ['', '', '', '', '', '', ''];
            const line = i === 15 ? 'border-b border-b-[#7ba0cf]' : 'border-b border-b-[#c0c0c0] [border-bottom-style:dotted]';
            body += '<tr class="h-5">' + e.map((text, c) => {
                const edge = c === 2 ? 'border-r border-r-[#808080]' : 'border-r border-r-[#c0c0c0] [border-right-style:dotted]';
                const look = c === 3 ? 'text-right pr-px' : c === 5 ? 'bg-[#e6e6e6] pl-[5px]' : 'pl-[5px]';
                return `<td class="overflow-hidden ${line} ${edge} ${look}">${text}</td>`;
            }).join('') + `<td class="bg-[#e6e6e6] ${line}"></td></tr>`;
        }
        document.getElementById('entries').innerHTML = body;
    </script>
</body>
</html>
